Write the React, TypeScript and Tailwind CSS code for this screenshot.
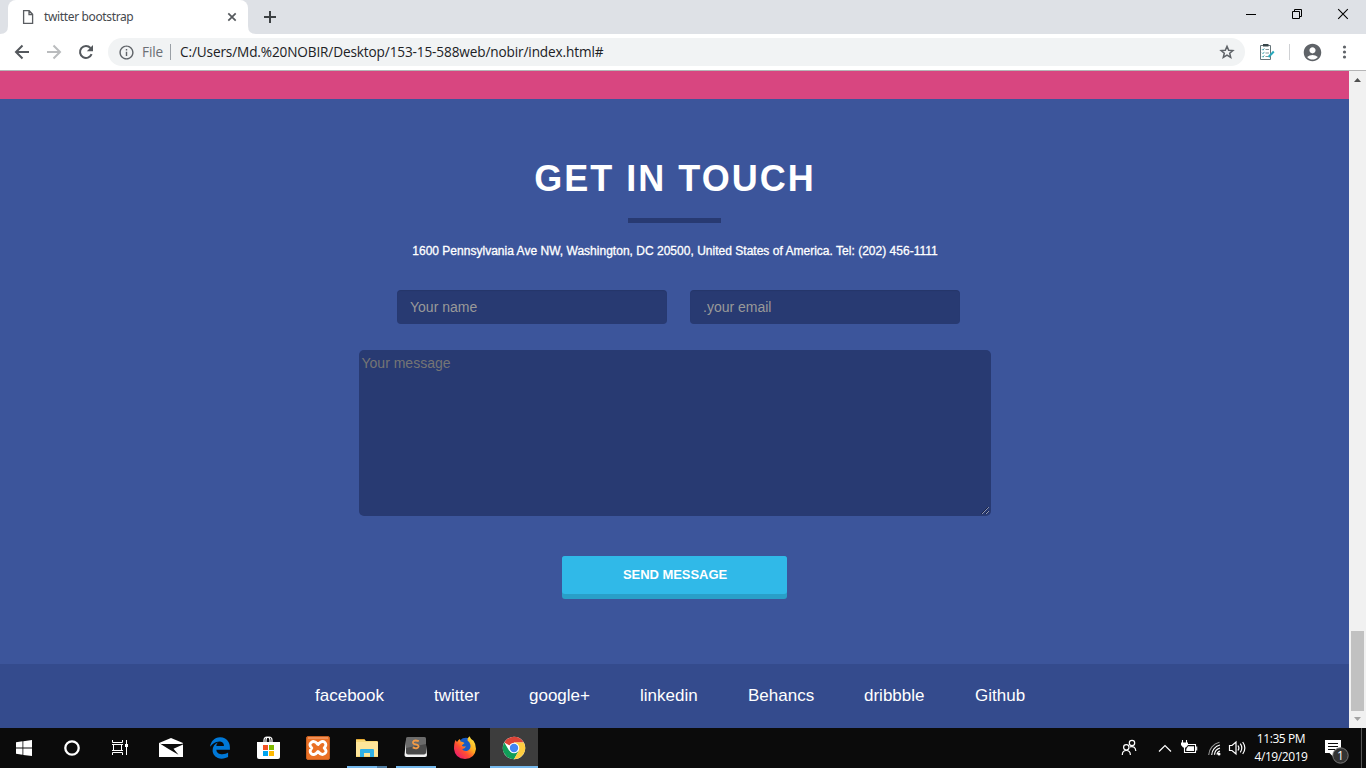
import type { ReactNode } from "react";
import { FaEdgeLegacy } from "react-icons/fa";
import { MdInfoOutline, MdAccountCircle } from "react-icons/md";

const UI = "font-['Open_Sans',sans-serif]";

function TabStrip() {
  return (
    <div className="flex h-[34px] shrink-0 bg-[#dee1e6]">
      <svg width="8" height="34" viewBox="0 0 8 34"><path d="M0 34Q8 34 8 26V34Z" fill="#fff" /></svg>
      <div className="flex w-[240px] items-center rounded-t-lg bg-white pl-[14px]">
        <svg width="12" height="16" viewBox="0 0 12 16" fill="none" stroke="#5a5d61" strokeWidth="1.3">
          <path d="M1.6 1.7H7.2L10.6 5.2V14.4H1.6Z M7 2V5.5H10.5" />
        </svg>
        <span className="ml-[10px] w-[179px] whitespace-nowrap font-['Noto_Sans',sans-serif] text-[12px] leading-4 tracking-[-0.36px] text-[#45494e]">twitter bootstrap</span>
        <svg width="10" height="10" viewBox="0 0 10 10" className="ml-1" stroke="#55595d" strokeWidth="1.7"><path d="M1.3 1.3L8.7 8.7M8.7 1.3L1.3 8.7" /></svg>
      </div>
      <svg width="8" height="34" viewBox="0 0 8 34"><path d="M8 34Q0 34 0 26V34Z" fill="#fff" /></svg>
      <svg width="28" height="34" viewBox="0 0 28 34" stroke="#3c4043" strokeWidth="2"><path d="M8 17H20M14 11V23" /></svg>
      <div className="ml-auto flex">
        <svg width="46" height="34" viewBox="0 0 46 34"><path d="M18 14.5H28" stroke="#000" /></svg>
        <svg width="46" height="34" viewBox="0 0 46 34" fill="none" stroke="#000"><path d="M18.5 11.5H25.5V18.5H18.5ZM20.5 11V9.5H27.5V16.5H26" /></svg>
        <svg width="46" height="34" viewBox="0 0 46 34" stroke="#000" strokeWidth="1.1"><path d="M18.2 9.2L27.8 18.8M27.8 9.2L18.2 18.8" /></svg>
      </div>
    </div>
  );
}

function Toolbar() {
  return (
    <div className="flex h-[37px] shrink-0 items-center border-b border-[#b5b5b6] bg-white">
      <div className="flex w-[108px] items-center gap-4 pl-[14px]">
        <svg width="16" height="16" viewBox="0 0 16 16" fill="none" stroke="#54585d" strokeWidth="2"><path d="M15 8H2.5M8.5 1.5L2 8L8.5 14.5" /></svg>
        <svg width="16" height="16" viewBox="0 0 16 16" fill="none" stroke="#babcbe" strokeWidth="2"><path d="M1 8H13.5M7.5 1.5L14 8L7.5 14.5" /></svg>
        <svg width="16" height="16" viewBox="0 0 16 16" fill="none" stroke="#54585d" strokeWidth="2"><path d="M13.6 10.2A6 6 0 1 1 12.5 4" /><path d="M15 1V7.2H8.8Z" fill="#54585d" stroke="none" /></svg>
      </div>
      <div className="flex h-7 w-[1137px] items-center rounded-full bg-[#f1f3f4] pl-[10px] pr-[10px]">
        <MdInfoOutline size={17} color="#5f6368" />
        <span className={`${UI} ml-[7px] w-[28px] whitespace-nowrap text-[13.6px] leading-5 tracking-[-0.1px] text-[#6b6f74]`}>File</span>
        <span className="h-4 w-px bg-[#9aa0a6]" />
        <span className={`${UI} ml-[9px] whitespace-nowrap text-[13.6px] leading-5 tracking-[-0.125px] text-[#202124]`}>C:/Users/Md.%20NOBIR/Desktop/153-15-588web/nobir/index.html#</span>
        <svg width="16" height="16" viewBox="0 0 16 16" className="ml-auto" fill="none" stroke="#5f6368" strokeWidth="1.5"><path d="M8 2.4L9.7 6.2L13.9 6.6L10.7 9.3L11.7 13.4L8 11.2L4.3 13.4L5.3 9.3L2.1 6.6L6.3 6.2Z" /></svg>
      </div>
      <svg width="44" height="36" viewBox="0 0 44 36" fill="none">
        <path d="M15.5 11.5H25.5V25.5H15.5Z" fill="#fff" stroke="#66757a" />
        <path d="M18 10H23.5V12.5H18Z" fill="#37464a" />
        <path d="M17 15.2l1 1 1.3-1.8M17 18.7l1 1 1.3-1.8M17 22.2l1 1 1.3-1.8" stroke="#35a0aa" strokeWidth=".9" />
        <path d="M20.5 15.5H24M20.5 19H24M20.5 22.5H23" stroke="#87979a" />
        <path d="M23.5 23L28.8 17.5" stroke="#27a9bd" strokeWidth="2" />
      </svg>
      <span className="h-4 w-px bg-[#cfd1d4]" />
      <MdAccountCircle size={21} color="#5f6368" className="ml-3" />
      <svg width="43" height="36" viewBox="0 0 43 36" fill="#5f6368"><circle cx="21.5" cy="13" r="1.6" /><circle cx="21.5" cy="18" r="1.6" /><circle cx="21.5" cy="23" r="1.6" /></svg>
    </div>
  );
}

const links = [
  { label: "facebook", cell: "w-[119px]" },
  { label: "twitter", cell: "w-[95px]" },
  { label: "google+", cell: "w-[111px]" },
  { label: "linkedin", cell: "w-[108px]" },
  { label: "Behancs", cell: "w-[116px]" },
  { label: "dribbble", cell: "w-[111px]" },
  { label: "Github", cell: "w-[60px]" },
];

function Page() {
  return (
    <div className="flex w-[1349px] flex-col font-['Liberation_Sans',sans-serif]">
      <div className="h-7 bg-[#d84680]" />
      <section className="flex h-[565px] flex-col items-center bg-[#3c559b]">
        <h1 className="mt-[59px] whitespace-nowrap pl-px text-[36px] font-bold leading-[42px] tracking-[2px] text-white">GET IN TOUCH</h1>
        <div className="mt-[18px] h-[5px] w-[93px] bg-[#283a72]" />
        <p className="mt-[19px] whitespace-nowrap pl-px text-[12px] leading-[18px] tracking-[0.015px] text-white [-webkit-text-stroke:0.3px_white]">1600 Pennsylvania Ave NW, Washington, DC 20500, United States of America. Tel: (202) 456-1111</p>
        <div className="mt-[30px] flex gap-[23px] pl-[8px]">
          <input placeholder="Your name" className="h-[34px] w-[270px] rounded bg-[#283a72] px-[13px] text-[14px] shadow-[inset_0_1px_1px_rgba(0,0,0,0.075)] outline-none placeholder:text-[#999999]" />
          <input placeholder=".your email" className="h-[34px] w-[270px] rounded bg-[#283a72] px-[13px] text-[14px] shadow-[inset_0_1px_1px_rgba(0,0,0,0.075)] outline-none placeholder:text-[#999999]" />
        </div>
        <div className="ml-px mt-[26px] flex h-[166px] w-[632px] shrink-0 items-end rounded-[5px] bg-[#283a72]">
          <textarea placeholder="Your message" className="h-[166px] flex-1 resize-none bg-transparent pl-[2.5px] pt-[3px] text-[14px] leading-5 outline-none placeholder:text-[#757575]" />
          <svg width="9" height="9" viewBox="0 0 9 9" className="mb-px mr-px"><path d="M1 8L8 1M5 8L8 5" stroke="#aeb4c7" strokeDasharray="1.1 .4" /><path d="M0 8L7 1M4 8L7 5" stroke="#111a38" strokeWidth=".7" /></svg>
        </div>
        <button className="mt-10 flex h-[43px] w-[225px] shrink-0 flex-col rounded-[3px] bg-[#299fc8]">
          <span className="flex h-[38px] w-full items-center justify-center rounded-[3px] bg-[#30b9e8] pl-px text-[13px] font-bold tracking-[-0.05px] text-white">SEND MESSAGE</span>
        </button>
      </section>
      <footer className="flex h-16 items-center bg-[#344b8d] pl-[315px] text-[17px] text-white">
        {links.map((l) => (
          <a key={l.label} className={`${l.cell} whitespace-nowrap`}>{l.label}</a>
        ))}
      </footer>
    </div>
  );
}

function Scrollbar() {
  return (
    <div className="flex w-[17px] flex-col items-center bg-[#f1f1f1]">
      <svg width="17" height="17" viewBox="0 0 17 17"><path d="M5 11L8.5 7L12 11Z" fill="#505050" /></svg>
      <div className="mt-[543px] h-20 w-[13px] bg-[#c1c1c1]" />
      <svg width="17" height="17" viewBox="0 0 17 17"><path d="M5 6L8.5 10L12 6Z" fill="#a3a3a3" /></svg>
    </div>
  );
}

function Cell({ children, active }: { children: ReactNode; active?: boolean }) {
  return (
    <svg width="48" height="40" viewBox="0 0 48 40" className={active ? "bg-[#3d3d3d]" : ""} fill="none">
      {children}
    </svg>
  );
}

function Taskbar() {
  return (
    <div className="flex h-10 shrink-0 bg-[#0b0b0b]">
      <div className="flex">
        <Cell><path fill="#fff" d="M16 14.3L22.5 13.3V19.6H16ZM23.3 13.2L32 12V19.6H23.3ZM16 20.4H22.5V26.8L16 25.8ZM23.3 20.4H32V28.1L23.3 26.9Z" /></Cell>
        <Cell><circle cx="24" cy="20" r="6.7" stroke="#fff" strokeWidth="2.3" /></Cell>
        <Cell>
          <path d="M16.5 12V14.5H26.5V12M16.5 27V24.5H26.5V27M17.5 17V22.5M25.5 17V22.5M16 16.5H27M16 22.5H27M30.5 12V27" stroke="#fff" />
          <rect x="29" y="16" width="3" height="3" fill="#fff" />
        </Cell>
      </div>
      <div className="ml-[3px] flex gap-px">
        <Cell>
          <path d="M12 15L24 10L36 15V29H12Z" fill="#fff" />
          <path d="M12 15L14 16H34L36 15.5V16.5L26.5 20.8L31.5 26.8L22 21.2Z" fill="#0b0b0b" />
        </Cell>
        <div className="flex w-12 items-center justify-center"><FaEdgeLegacy size={22} color="#0078d7" /></div>
        <Cell>
          <path d="M19 15V12.5Q19 9 22 9T25 12.5V15M21 14V12Q21 9 24 9T27 12V15" stroke="#fff" strokeWidth="1.2" />
          <path d="M12 14H35V29Q35 31 33 31H14Q12 31 12 29Z" fill="#fff" />
          <path d="M18 17H23V22H18Z" fill="#f25022" /><path d="M24 17H29V22H24Z" fill="#7fba00" />
          <path d="M18 23H23V28H18Z" fill="#00a4ef" /><path d="M24 23H29V28H24Z" fill="#ffb900" />
        </Cell>
        <Cell>
          <rect x="12.5" y="8.5" width="23" height="23" rx="1.5" fill="#ea7025" stroke="#c65f20" />
          <path d="M14 10H34" stroke="#f5a478" strokeWidth="1.2" />
          <path d="M24 16.5Q20.5 12 17.4 14.3T17.8 20Q14.7 23.2 17.4 25.7T24 23.5Q27.5 28 30.6 25.7T30.2 20Q33.3 16.8 30.6 14.3T24 16.5Z" stroke="#fff" strokeWidth="2.9" strokeLinejoin="round" />
        </Cell>
        <Cell>
          <path d="M13 12Q13 11 14 11H21L23 13H34Q35 13 35 14V29H13Z" fill="#f8d775" />
          <path d="M14 11H21L22 12H14Z" fill="#e8a92d" />
          <path d="M13 14H35V28H13Z" fill="#ffe69a" />
          <path d="M17 29V22Q17 21 18 21H30Q31 21 31 22V29H27V25H21V29Z" fill="#31b1e6" />
          <path d="M4 38H34V40H4Z" fill="#76b9ed" /><path d="M34 38H44V40H34Z" fill="#527fa4" />
        </Cell>
        <Cell>
          <path d="M14 12L12.5 27Q12.5 29 14.5 29H33Q35 29 35 27L33.5 12Z" fill="#f4f4f4" />
          <rect x="14" y="9" width="20" height="17.5" rx="2" fill="#4b4b4b" />
          <path d="M14 11Q14 9 16 9H32Q34 9 34 11V16L14 20Z" fill="#6b6b6b" />
          <path d="M26.8 13.2Q22 11.5 21 14C20.3 17.3 27 15.3 26.6 18.6Q25.3 21.5 20.7 19.4" stroke="#f39a45" strokeWidth="1.8" />
          <path d="M4 38H44V40H4Z" fill="#76b9ed" />
        </Cell>
        <Cell>
          <defs>
            <linearGradient id="fox" x1="34" y1="9" x2="15" y2="29" gradientUnits="userSpaceOnUse"><stop stopColor="#fff14a" /><stop offset=".4" stopColor="#ffad1e" /><stop offset=".65" stopColor="#ff5031" /><stop offset="1" stopColor="#e81572" /></linearGradient>
          </defs>
          <circle cx="25" cy="18" r="8.3" fill="#185cc6" />
          <path d="M14.5 12L16 14Q17.5 11.5 19 11L19.5 13.5Q21.5 13.5 23.5 15L21 17.2Q20.3 18 22.5 18.6L25 18.5Q23 21.5 20.8 20.8Q23.3 24.5 27.5 22.2Q31 19.5 28.5 14.5L26.5 12.5Q26 10 28.5 8.2Q30 12 32.5 12.7Q35 16 35 21Q33.8 30.8 24 31Q14 30.5 13 21Q13 15 14.5 12Z" fill="url(#fox)" />
        </Cell>
        <Cell active>
          <circle cx="24" cy="20" r="11.2" fill="#fff" />
          <path d="M24 20L14.3 14.4A11.2 11.2 0 0 1 33.7 14.4H24Z" fill="#dc4437" />
          <path d="M14.3 14.4A11.2 11.2 0 0 0 24 31.2L28.8 22.8L24 20L19.2 22.8Z" fill="#109d58" />
          <path d="M33.7 14.4A11.2 11.2 0 0 1 24 31.2L28.8 22.8L24 14.4Z" fill="#ffcd40" />
          <circle cx="24" cy="20" r="5.3" fill="#fff" /><circle cx="24" cy="20" r="4.2" fill="#4285f4" />
          <path d="M0 38H48V40H0Z" fill="#76b9ed" />
        </Cell>
      </div>
      <div className="ml-auto flex">
        <svg width="150" height="40" viewBox="1100 0 150 40" fill="none" stroke="#fff" strokeWidth="1.2">
          <circle cx="1126.3" cy="19.3" r="2.7" /><path d="M1122.3 27Q1122.3 22.5 1126.3 22.5T1130.4 27" />
          <circle cx="1132" cy="15" r="2.7" /><path d="M1130 18.8Q1135.5 17.5 1135.8 23" />
          <path d="M1159 23.5L1165 17.5L1171 23.5" />
          <path d="M1188 16.5H1195.5V24.5H1184.5V19M1196.7 18.5V22.5M1182.5 12V15M1186.5 12V15" strokeWidth="1.1" />
          <path d="M1181 14.5H1188V17L1186 19.5H1183L1181 17Z" fill="#fff" stroke="none" /><path d="M1188 18.3H1194V23H1186.3V21Z" fill="#fff" stroke="none" />
          <path d="M1217 26.5A4 4 0 0 1 1220 23M1214.5 26.8A7.5 7.5 0 0 1 1220 20" /><path d="M1211.7 27A10.5 10.5 0 0 1 1220 17" strokeWidth="1.1" /><path d="M1208.7 27A13.5 13.5 0 0 1 1219.5 14.3" stroke="#999" strokeWidth="1.1" />
          <circle cx="1219" cy="26" r="1.5" fill="#fff" stroke="none" />
          <path d="M1229.5 17.5H1232L1236 14V26L1232 22.5H1229.5ZM1238 17.5Q1239.8 20 1238 22.5M1240.3 15.7Q1243.3 20 1240.3 24.3M1242.7 14Q1247 20 1242.7 26" />
        </svg>
        <div className={`${UI} flex w-[62px] flex-col items-center pt-[2px] text-[12px] leading-[18px] tracking-[-0.42px] text-white`}>
          <span className="whitespace-nowrap">11:35 PM</span>
          <span className="whitespace-nowrap">4/19/2019</span>
        </div>
        <svg width="54" height="40" viewBox="1312 0 54 40">
          <path d="M1325 12H1341V25H1333V28.5L1329.5 25H1325Z" fill="#fff" />
          <path d="M1328 15.5H1338M1328 18.5H1338M1328 21.5H1335" stroke="#0b0b0b" />
          <circle cx="1340.5" cy="27.5" r="7.7" fill="#333" stroke="#777" strokeWidth="1" />
          <text x="1340.5" y="31.7" textAnchor="middle" fontFamily="Open Sans, sans-serif" fontSize="12" fill="#fff">1</text>
          <path d="M1361.5 0V40" stroke="#555" />
        </svg>
      </div>
    </div>
  );
}

export default function App() {
  return (
    <div className="flex h-[768px] w-[1366px] flex-col overflow-hidden">
      <TabStrip />
      <Toolbar />
      <div className="flex h-[657px] shrink-0">
        <Page />
        <Scrollbar />
      </div>
      <Taskbar />
    </div>
  );
}
